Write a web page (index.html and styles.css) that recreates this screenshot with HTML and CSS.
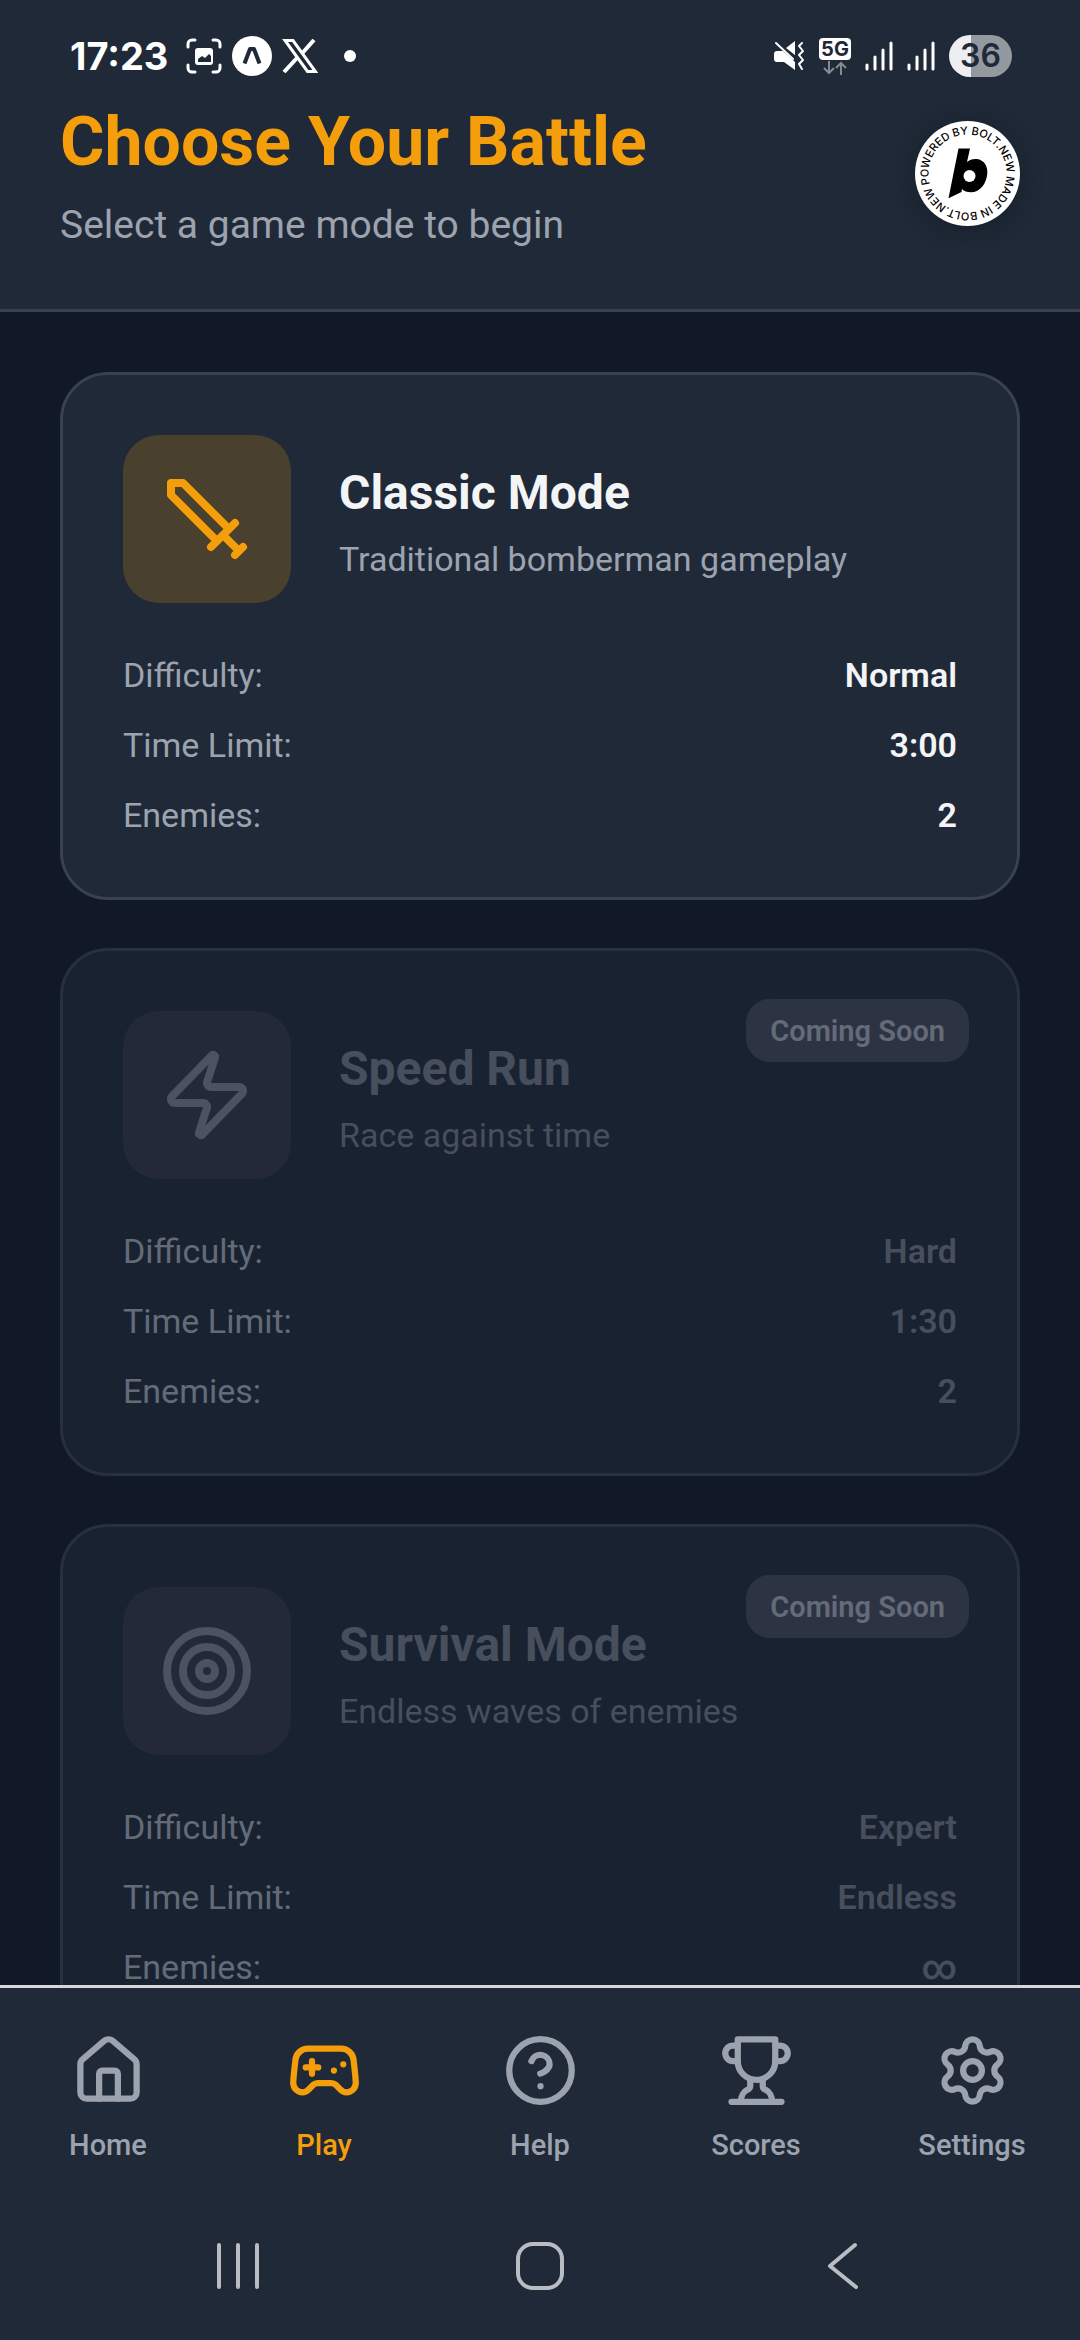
FILE: index.html
```
<!DOCTYPE html>
<html lang="en">
<head>
    <meta charset="UTF-8">
    <meta name="viewport" content="width=device-width, initial-scale=1.0">
    <title>Choose Your Battle</title>
    <link rel="stylesheet" href="styles.css">
</head>
<body>
    <div class="app">
        <div class="status-bar">
            <div class="status-left">
                <span class="clock">17:23</span>
                <svg class="status-icon" width="36" height="36" viewBox="0 0 36 36" fill="none" stroke="#fff" stroke-width="3" stroke-linecap="round">
                    <path d="M2 9V6a4 4 0 0 1 4-4h3M27 2h3a4 4 0 0 1 4 4v3M34 27v3a4 4 0 0 1-4 4h-3M9 34H6a4 4 0 0 1-4-4v-3"/>
                    <rect x="9" y="10" width="18" height="17" rx="3" fill="#fff" stroke="none"/>
                    <path d="M12 24v-3l4-3 3 2 4-4 2 2v6z" fill="#1f2937" stroke="none"/>
                </svg>
                <svg class="status-icon" width="40" height="40" viewBox="0 0 40 40">
                    <circle cx="20" cy="20" r="20" fill="#fff"/>
                    <path d="M12.500 27.500L18 13h4l5.500 14.500" fill="none" stroke="#1f2937" stroke-width="4" stroke-linejoin="round"/>
                </svg>
                <svg class="status-icon" width="36" height="34" viewBox="0 0 36 34" fill="none" stroke="#fff">
                    <path d="M3 1.500h8L33.500 32.500h-8z" stroke-width="3"/>
                    <path d="M32 1L19.500 15M15 19L2 33" stroke-width="4"/>
                </svg>
                <span class="status-dot"></span>
            </div>
            <div class="status-right">
                <svg width="32" height="32" viewBox="0 0 32 32">
                    <path d="M13 8l9-7v14zM4 11h6l12 11v8L11 22H4a3 3 0 0 1-3-3v-5a3 3 0 0 1 3-3z" fill="#fff"/>
                    <path d="M3 3l17 16" stroke="#fff" stroke-width="2" stroke-linecap="round"/>
                    <path d="M29 3l-3 3 4 5-4 4 4 5-4 4 3 5" fill="none" stroke="#fff" stroke-width="2" stroke-linecap="round" stroke-linejoin="round"/>
                </svg>
                <div class="network">
                    <span class="network-type">5G</span>
                    <svg width="24" height="14" viewBox="0 0 24 14" fill="none" stroke="#858a92" stroke-width="2">
                        <path d="M6 0v12M1 7l5 5 5-5M18 14V2M13 7l5-5 5 5"/>
                    </svg>
                </div>
                <svg class="signal" width="28" height="30" viewBox="0 0 28 30" stroke="#fff" stroke-width="3" stroke-linecap="round">
                    <path d="M2 24v4M10 16v12M18 9v19M26 2v26"/>
                </svg>
                <svg class="signal" width="28" height="30" viewBox="0 0 28 30" stroke="#fff" stroke-width="3" stroke-linecap="round">
                    <path d="M2 24v4M10 16v12M18 9v19M26 2v26"/>
                </svg>
                <span class="battery">36</span>
            </div>
        </div>

        <header class="header">
            <div>
                <h1>Choose Your Battle</h1>
                <p>Select a game mode to begin</p>
            </div>
            <a class="bolt-badge" href="#" aria-label="Powered by Bolt.new">
                <svg viewBox="0 0 105 105">
                    <defs>
                        <path id="ring" d="M15 63.250a39 39 0 0 1 75-21.500a39 39 0 0 1-75 21.500"/>
                    </defs>
                    <circle cx="52.500" cy="52.500" r="52.500" fill="#fff"/>
                    <text class="ring-text"><textPath href="#ring">POWERED BY BOLT.NEW MADE IN BOLT.NEW</textPath></text>
                    <path d="M43.500 27.500H55l-3 13.500c3-2.500 6-3.500 10-3 7 1 11 7 10.300 14.500C71.500 63 65 71.300 56 71.300c-4 0-7-1-9-3.300l-.5 3L33.500 77.300z" fill="#000"/>
                    <circle cx="54.500" cy="55" r="6" fill="#fff"/>
                </svg>
            </a>
        </header>

        <main class="modes">
            <section class="card">
                <div class="card-top">
                    <div class="card-icon">
                        <svg class="icon" viewBox="0 0 24 24">
                            <path d="M14.500 17.500L3 6V3h3l11.500 11.500M13 19l6-6M16 16l4 4M19 21l2-2"/>
                        </svg>
                    </div>
                    <div class="card-title">
                        <h2>Classic Mode</h2>
                        <p>Traditional bomberman gameplay</p>
                    </div>
                </div>
                <dl class="stats">
                    <div><dt>Difficulty:</dt><dd>Normal</dd></div>
                    <div><dt>Time Limit:</dt><dd>3:00</dd></div>
                    <div><dt>Enemies:</dt><dd>2</dd></div>
                </dl>
            </section>

            <section class="card locked">
                <span class="soon">Coming Soon</span>
                <div class="card-top">
                    <div class="card-icon">
                        <svg class="icon" viewBox="0 0 24 24">
                            <path d="M4 14a1 1 0 0 1-.78-1.63l9.900-10.200a.5.5 0 0 1 .86.46l-1.920 6.020A1 1 0 0 0 13 10h7a1 1 0 0 1 .78 1.630l-9.900 10.200a.5.5 0 0 1-.86-.46l1.920-6.020A1 1 0 0 0 11 14z"/>
                        </svg>
                    </div>
                    <div class="card-title">
                        <h2>Speed Run</h2>
                        <p>Race against time</p>
                    </div>
                </div>
                <dl class="stats">
                    <div><dt>Difficulty:</dt><dd>Hard</dd></div>
                    <div><dt>Time Limit:</dt><dd>1:30</dd></div>
                    <div><dt>Enemies:</dt><dd>2</dd></div>
                </dl>
            </section>

            <section class="card locked">
                <span class="soon">Coming Soon</span>
                <div class="card-top">
                    <div class="card-icon">
                        <svg class="icon" viewBox="0 0 24 24">
                            <circle cx="12" cy="12" r="10"/>
                            <circle cx="12" cy="12" r="6"/>
                            <circle cx="12" cy="12" r="2"/>
                        </svg>
                    </div>
                    <div class="card-title">
                        <h2>Survival Mode</h2>
                        <p>Endless waves of enemies</p>
                    </div>
                </div>
                <dl class="stats">
                    <div><dt>Difficulty:</dt><dd>Expert</dd></div>
                    <div><dt>Time Limit:</dt><dd>Endless</dd></div>
                    <div><dt>Enemies:</dt><dd>∞</dd></div>
                </dl>
            </section>
        </main>

        <nav class="tabs">
            <a href="#">
                <svg class="icon" viewBox="0 0 24 24">
                    <path d="M15 21v-8a1 1 0 0 0-1-1h-4a1 1 0 0 0-1 1v8"/>
                    <path d="M3 10a2 2 0 0 1 .709-1.528l7-5.999a2 2 0 0 1 2.582 0l7 5.999A2 2 0 0 1 21 10v9a2 2 0 0 1-2 2H5a2 2 0 0 1-2-2z"/>
                </svg>
                Home
            </a>
            <a class="active" href="#">
                <svg class="icon" viewBox="0 0 24 24">
                    <path d="M6 11h4M8 9v4M15 12h.01M18 10h.01"/>
                    <path d="M17.320 5H6.680a4 4 0 0 0-3.978 3.590c-.006.052-.01.101-.017.152C2.604 9.416 2 14.456 2 16a3 3 0 0 0 3 3c1 0 1.500-.5 2-1l1.414-1.414A2 2 0 0 1 9.828 16h4.344a2 2 0 0 1 1.414.586L17 18c.5.5 1 1 2 1a3 3 0 0 0 3-3c0-1.545-.604-6.584-.685-7.258-.007-.05-.011-.1-.017-.151A4 4 0 0 0 17.320 5z"/>
                </svg>
                Play
            </a>
            <a href="#">
                <svg class="icon" viewBox="0 0 24 24">
                    <circle cx="12" cy="12" r="10"/>
                    <path d="M9.090 9a3 3 0 0 1 5.830 1c0 2-3 3-3 3M12 17h.01"/>
                </svg>
                Help
            </a>
            <a href="#">
                <svg class="icon" viewBox="0 0 24 24">
                    <path d="M6 9H4.500a2.500 2.500 0 0 1 0-5H6M18 9h1.500a2.500 2.500 0 0 0 0-5H18M4 22h16"/>
                    <path d="M10 14.660V17c0 .55-.47.98-.97 1.210C7.850 18.750 7 20.240 7 22M14 14.660V17c0 .55.47.98.97 1.210C16.150 18.750 17 20.240 17 22"/>
                    <path d="M18 2H6v7a6 6 0 0 0 12 0V2Z"/>
                </svg>
                Scores
            </a>
            <a href="#">
                <svg class="icon" viewBox="0 0 24 24">
                    <path d="M9.671 4.136a2.340 2.340 0 0 1 4.659 0 2.340 2.340 0 0 0 3.319 1.915 2.340 2.340 0 0 1 2.330 4.033 2.340 2.340 0 0 0 0 3.831 2.340 2.340 0 0 1-2.330 4.033 2.340 2.340 0 0 0-3.319 1.915 2.340 2.340 0 0 1-4.659 0 2.340 2.340 0 0 0-3.320-1.915 2.340 2.340 0 0 1-2.330-4.033 2.340 2.340 0 0 0 0-3.831A2.340 2.340 0 0 1 6.350 6.051a2.340 2.340 0 0 0 3.319-1.915"/>
                    <circle cx="12" cy="12" r="3"/>
                </svg>
                Settings
            </a>
        </nav>

        <div class="system-nav">
            <button aria-label="Recent apps">
                <svg width="48" height="48" viewBox="0 0 48 48"><path d="M5 3v42M24 3v42M43 3v42"/></svg>
            </button>
            <button aria-label="Home">
                <svg width="48" height="48" viewBox="0 0 48 48"><rect x="2" y="2" width="44" height="44" rx="15"/></svg>
            </button>
            <button aria-label="Back">
                <svg width="48" height="48" viewBox="0 0 48 48"><path d="M37 3L12 24l26 21"/></svg>
            </button>
        </div>
    </div>
</body>
</html>
```
FILE: styles.css
```
* {
    box-sizing: border-box;
}

body, h1, h2, p, dl, dd {
    margin: 0;
}

body {
    background: #111827;
    font-family: Roboto, sans-serif;
    color: #f3f4f6;
}

.app {
    display: flex;
    flex-direction: column;
    height: 100vh;
}

.icon {
    fill: none;
    stroke: currentColor;
    stroke-width: 2;
    stroke-linecap: round;
    stroke-linejoin: round;
}

/* status bar */
.status-bar {
    display: flex;
    justify-content: space-between;
    align-items: center;
    height: 102px;
    padding: 10px 68px 0 70px;
    background: #1f2937;
    flex-shrink: 0;
}

.status-left, .status-right {
    display: flex;
    align-items: center;
}

.status-left {
    gap: 10px;
}

.status-right {
    gap: 14px;
}

.clock {
    font-family: Inter, sans-serif;
    font-size: 38px;
    font-weight: 700;
    color: #ffffff;
    margin-right: 8px;
}

.status-dot {
    width: 12px;
    height: 12px;
    border-radius: 50%;
    background: #ffffff;
    margin-left: 16px;
}

.network {
    display: flex;
    flex-direction: column;
    align-items: center;
    gap: 1px;
}

.network-type {
    width: 32px;
    border-radius: 4px;
    background: #ffffff;
    color: #1f2937;
    font-family: Inter, sans-serif;
    font-size: 20px;
    font-weight: 700;
    line-height: 22px;
    text-align: center;
}

.battery {
    width: 63px;
    border-radius: 21px;
    background: linear-gradient(90deg, #eceef0 35%, #9499a0 35%);
    color: #1f2937;
    font-family: Inter, sans-serif;
    font-size: 32px;
    font-weight: 600;
    line-height: 42px;
    text-align: center;
}

/* header */
.header {
    display: flex;
    justify-content: space-between;
    align-items: center;
    padding: 0 60px 57px;
    background: #1f2937;
    border-bottom: 3px solid #374151;
    flex-shrink: 0;
}

.header h1 {
    font-size: 68px;
    font-weight: 700;
    line-height: 80px;
    color: #f59e0b;
    margin-bottom: 16px;
}

.header p {
    font-size: 39px;
    line-height: 54px;
    color: #9ca3af;
}

.bolt-badge {
    width: 105px;
    height: 105px;
    margin-bottom: 8px;
    border-radius: 50%;
    box-shadow: 0 4px 24px rgba(0, 0, 0, 0.25);
}

.bolt-badge svg {
    display: block;
}

.ring-text {
    font-family: Inter, sans-serif;
    font-size: 11px;
    font-weight: 500;
}

/* game modes */
.modes {
    flex: 1;
    min-height: 0;
    overflow-y: auto;
    scrollbar-width: none;
    padding: 60px;
}

.card {
    position: relative;
    padding: 60px 60px 58px;
    margin-bottom: 48px;
    background: #1f2937;
    border: 3px solid #374151;
    border-radius: 48px;
}

.card-top {
    display: flex;
    align-items: center;
    gap: 48px;
    margin-bottom: 48px;
}

.card-icon {
    display: flex;
    align-items: center;
    justify-content: center;
    width: 168px;
    height: 168px;
    border-radius: 36px;
    background: rgba(245, 158, 11, 0.2);
    color: #f59e0b;
}

.card-icon .icon {
    width: 96px;
    height: 96px;
}

.card-title {
    padding-top: 8px;
}

.card h2 {
    font-size: 48px;
    font-weight: 700;
    line-height: 60px;
    margin-bottom: 12px;
}

.card p {
    font-size: 34px;
    line-height: 48px;
    color: #9ca3af;
}

.stats {
    display: flex;
    flex-direction: column;
    gap: 22px;
    font-size: 34px;
    line-height: 48px;
}

.stats div {
    display: flex;
    justify-content: space-between;
}

.stats dt {
    color: #9ca3af;
}

.stats dd {
    font-weight: 600;
}

.locked {
    opacity: 0.6;
}

.locked .card-icon {
    background: #313545;
    color: #757988;
}

.locked h2, .locked p, .locked dd {
    color: #6b7280;
}

.soon {
    position: absolute;
    top: 48px;
    right: 48px;
    padding: 13px 24px 11px;
    border-radius: 24px;
    background: #3f4856;
    color: #9ca3af;
    font-size: 29px;
    font-weight: 600;
    line-height: 39px;
}

/* bottom tabs */
.tabs {
    display: flex;
    padding: 45px 0 28px;
    background: #1f2937;
    border-top: 3px solid #d8d8d8;
    flex-shrink: 0;
}

.tabs a {
    flex: 1;
    display: flex;
    flex-direction: column;
    align-items: center;
    gap: 18px;
    color: #9ca3af;
    font-size: 29px;
    font-weight: 500;
    line-height: 38px;
    text-decoration: none;
}

.tabs .active {
    color: #f59e0b;
}

.tabs .icon {
    width: 75px;
    height: 75px;
}

.system-nav {
    display: grid;
    grid-template-columns: repeat(3, 28%);
    justify-content: center;
    height: 148px;
    background: #1f2937;
    flex-shrink: 0;
}

.system-nav button {
    display: flex;
    align-items: center;
    justify-content: center;
    padding: 0;
    border: none;
    background: none;
    cursor: pointer;
}

.system-nav svg {
    fill: none;
    stroke: #b9bdc3;
    stroke-width: 4;
    stroke-linecap: round;
    stroke-linejoin: round;
}
```
